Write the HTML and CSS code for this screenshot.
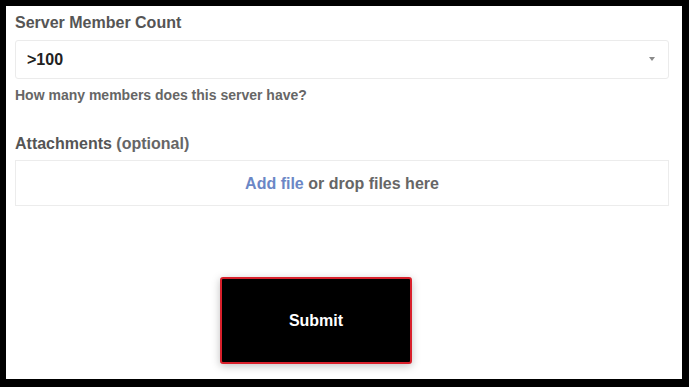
FILE: index.html
```html
<!DOCTYPE html>
<html>
<head>
<meta charset="utf-8">
<link rel="stylesheet" href="styles.css">
</head>
<body>
<div class="page">
  <div class="field-label">Server Member Count</div>
  <div class="select">
    <span class="select-value">&gt;100</span>
    <span class="caret"></span>
  </div>
  <div class="help">How many members does this server have?</div>
  <div class="field-label attach-label">Attachments <span class="optional">(optional)</span></div>
  <div class="dropzone"><span class="link">Add file</span> or drop files here</div>
  <button class="submit">Submit</button>
</div>
</body>
</html>
```
FILE: styles.css
```css
html, body {
  margin: 0;
  padding: 0;
  background: #000;
}
body {
  width: 689px;
  height: 387px;
  overflow: hidden;
  font-family: "Liberation Sans", Arial, sans-serif;
}
.page {
  margin: 6px 0 0 6px;
  width: 676px;
  height: 373px;
  background: #fff;
  box-sizing: border-box;
  padding: 8px 13px 0 9px;
  display: flex;
  flex-direction: column;
}
.field-label {
  font-size: 16px;
  font-weight: bold;
  line-height: 18px;
  color: #555;
}
.select {
  margin-top: 8px;
  height: 39px;
  box-sizing: border-box;
  border: 1px solid #ebebeb;
  border-radius: 3px;
  display: flex;
  align-items: center;
  justify-content: space-between;
  padding: 1px 13px 0 11px;
}
.select-value {
  font-size: 16px;
  font-weight: bold;
  color: #222;
}
.caret {
  width: 0;
  height: 0;
  border-left: 3px solid transparent;
  border-right: 3px solid transparent;
  border-top: 4px solid #8a8a8a;
  margin-top: -3px;
}
.help {
  margin-top: 8px;
  font-size: 14px;
  font-weight: bold;
  line-height: 16px;
  color: #666;
}
.attach-label {
  margin-top: 32px;
}
.optional {
  color: #666;
}
.dropzone {
  margin-top: 7px;
  height: 46px;
  box-sizing: border-box;
  border: 1px solid #ececec;
  display: flex;
  align-items: center;
  justify-content: center;
  padding-top: 2px;
  font-size: 16px;
  font-weight: bold;
  color: #666;
  white-space: pre;
}
.link {
  color: #6b87c6;
}
.submit {
  margin-top: 71px;
  margin-left: 205px;
  width: 192px;
  height: 87px;
  box-sizing: border-box;
  background: #000;
  border: 2px solid #d8202b;
  border-radius: 3px;
  box-shadow: 0 2px 8px rgba(0,0,0,0.25);
  color: #fff;
  font-family: "Liberation Sans", Arial, sans-serif;
  font-size: 16px;
  font-weight: bold;
  padding: 0;
}
```
